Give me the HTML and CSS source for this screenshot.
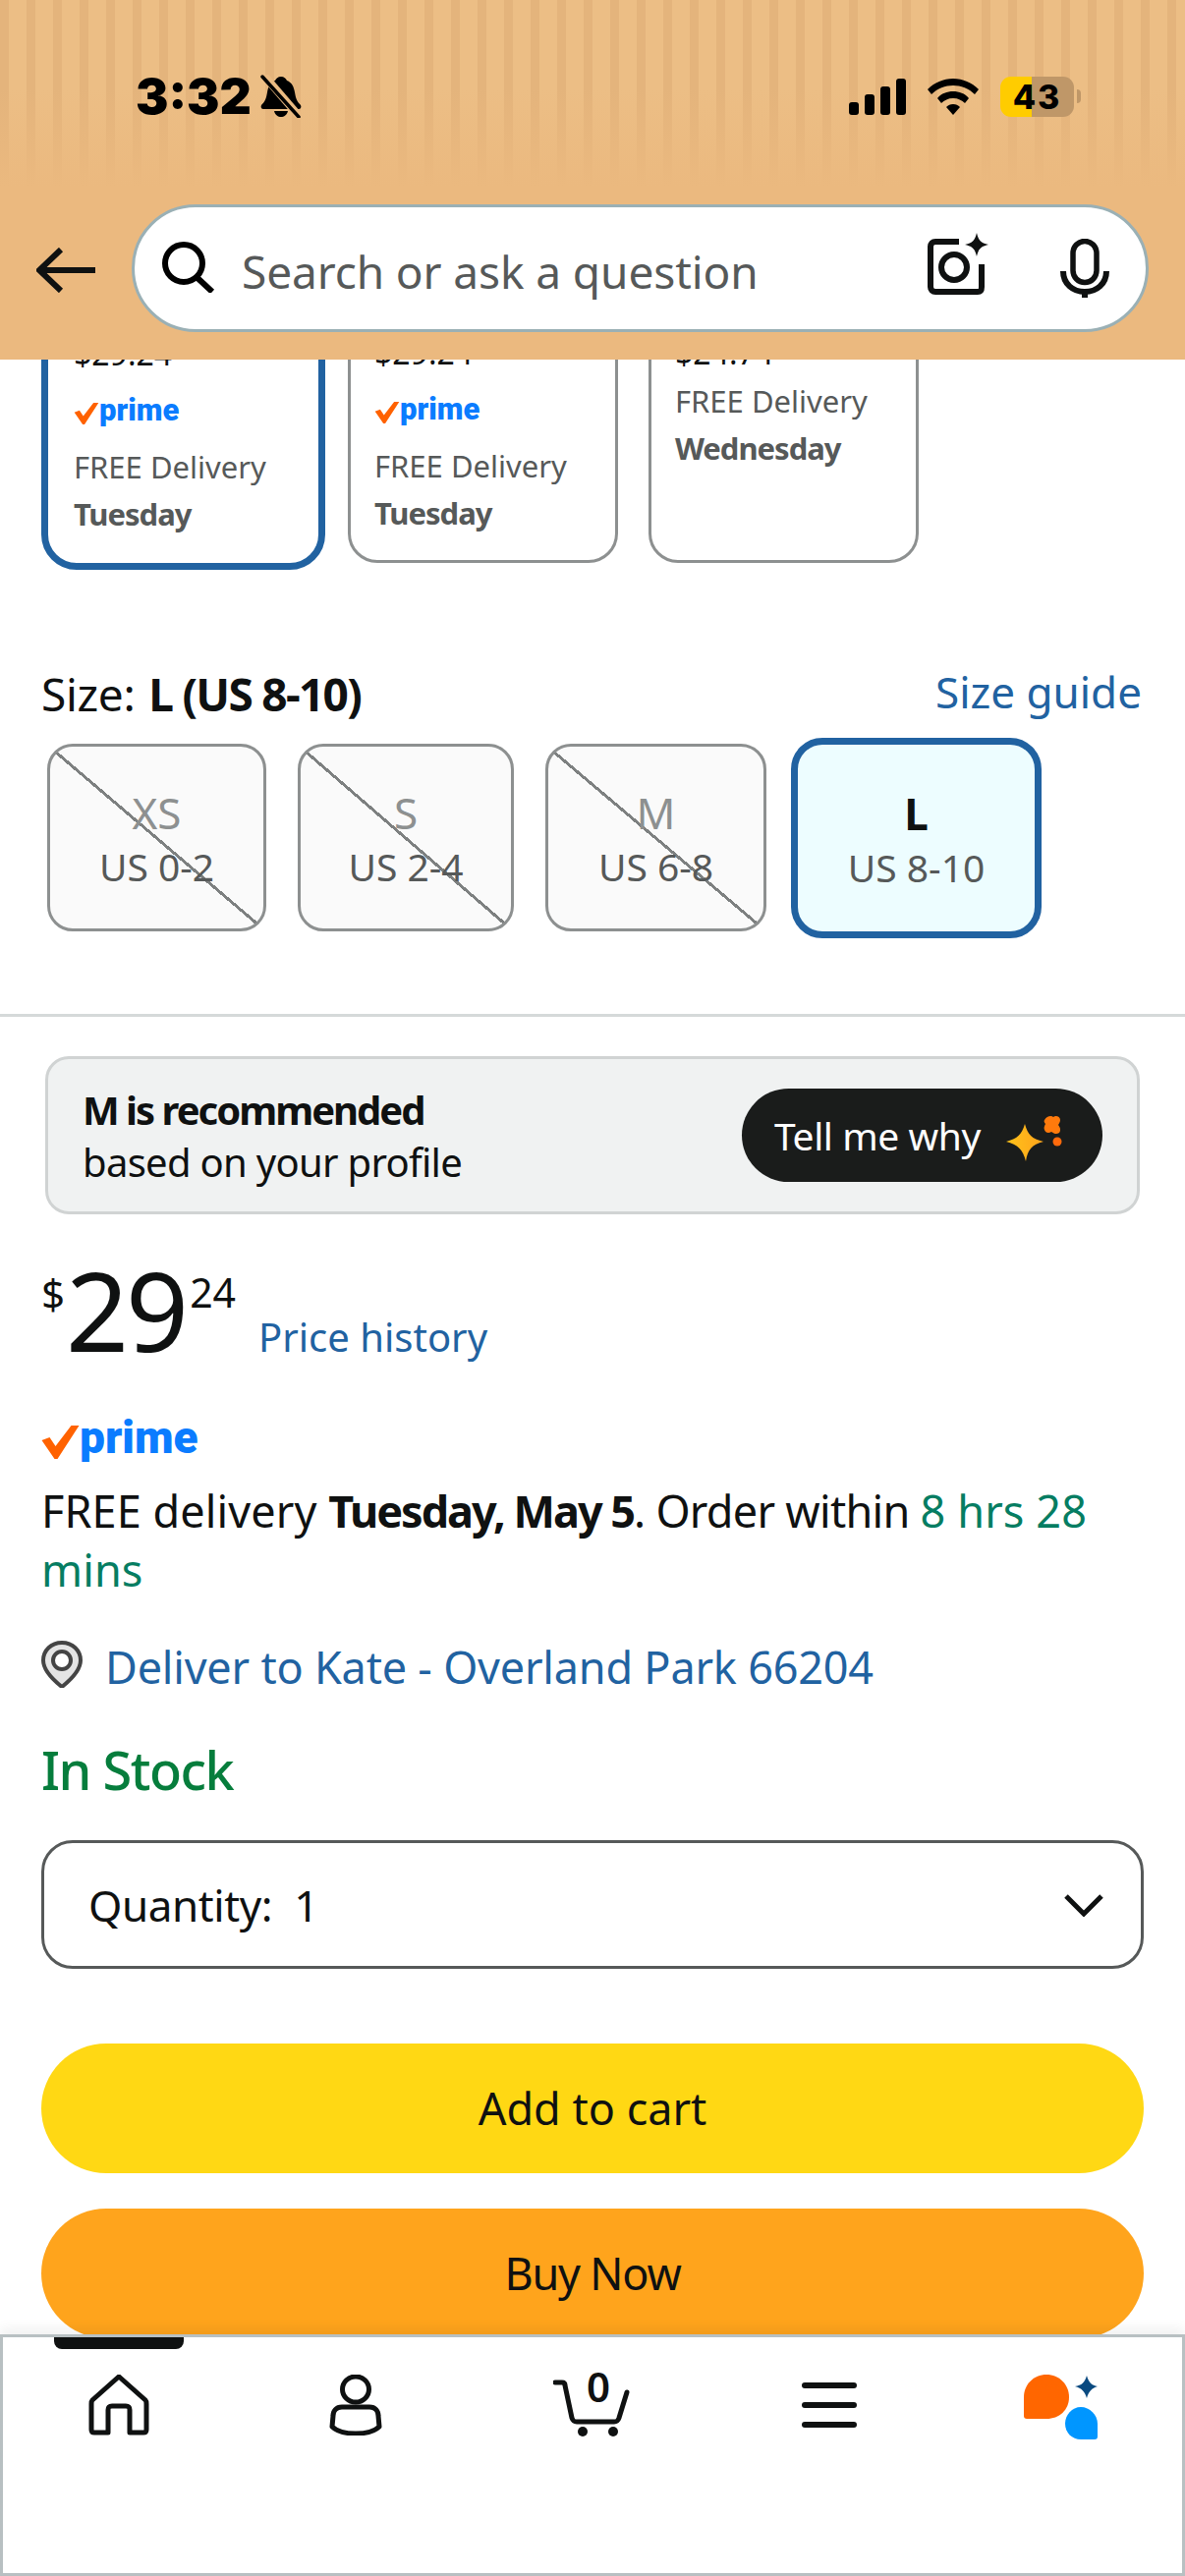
FILE: index.html
```html
<!DOCTYPE html>
<html lang="en">
<head>
<meta charset="utf-8">
<title>Product</title>
<link rel="stylesheet" href="styles.css">
</head>
<body>
<div class="app">
  <header class="top">
    <div class="status">
      <span class="time">3:32</span>
      <svg class="bell" viewBox="0 0 42 44"><path d="M21 2c3 0 5 2 6 4 5 2 7 6 8 12 1 6 2 9 6 13 1 2 0 4-2 4H3c-2 0-3-2-2-4 4-4 5-7 6-13 1-6 3-10 8-12 1-2 3-4 6-4z" fill="#000"/><path d="M14 37h14c-1 4-4 6-7 6s-6-2-7-6z" fill="#000"/><path d="M3 0l37 43" stroke="#ebbb82" stroke-width="8"/><path d="M2 2l37 41" stroke="#000" stroke-width="3.5" stroke-linecap="round"/></svg>
      <span class="status-gap"></span>
      <svg class="signal" viewBox="0 0 58 37"><rect x="0" y="24" width="10" height="13" rx="3"/><rect x="16" y="16" width="10" height="21" rx="3"/><rect x="32" y="8" width="10" height="29" rx="3"/><rect x="48" y="0" width="10" height="37" rx="3"/></svg>
      <svg class="wifi" viewBox="0 0 52 37"><path d="M26 0c10 0 19 4 26 11l-4 5C42 10 34 7 26 7S10 10 4 16l-4-5C7 4 16 0 26 0z"/><path d="M26 13c6 0 12 2 16 7l-4 5c-3-3-7-5-12-5s-9 2-12 5l-4-5c4-5 10-7 16-7z"/><path d="M26 26c3 0 5 1 7 3l-7 8-7-8c2-2 4-3 7-3z"/></svg>
      <span class="battery"><span class="battery-num">43</span></span>
      <span class="battery-cap"></span>
    </div>
    <div class="searchrow">
      <svg class="back" viewBox="0 0 60 46"><path d="M25 2L3 23l22 21M4 23h56" fill="none" stroke="#0f1111" stroke-width="6"/></svg>
      <div class="search">
        <svg class="icon-search" viewBox="0 0 54 52"><circle cx="22" cy="22" r="19" fill="none" stroke="#000" stroke-width="6"/><path d="M35 36l16 15" stroke="#000" stroke-width="6"/></svg>
        <span class="search-text">Search or ask a question</span>
        <svg class="icon-cam" viewBox="0 0 66 66"><path d="M35 9H11c-3 0-5 2-5 5v41c0 3 2 5 5 5h43c3 0 4-2 4-5V32" fill="none" stroke="#0f1111" stroke-width="6"/><circle cx="30" cy="35" r="13" fill="none" stroke="#0f1111" stroke-width="6"/><path d="M53 0c2 8 4 10 12 12-8 2-10 4-12 12-2-8-4-10-12-12 8-2 10-4 12-12z" fill="#0f1111"/></svg>
        <svg class="icon-mic" viewBox="0 0 50 60"><rect x="13" y="2.500" width="24" height="42" rx="12" fill="none" stroke="#0f1111" stroke-width="5.500"/><path d="M3 33c0 13 10 21 22 21s22-8 22-21" fill="none" stroke="#0f1111" stroke-width="6"/><path d="M25 52v8" stroke="#0f1111" stroke-width="6"/></svg>
      </div>
    </div>
  </header>

  <main class="content">
    <div class="offers">
      <div class="offer offer-on">
        <div class="offer-price">$29.24</div>
        <div class="prime prime-sm"><svg class="check-sm" viewBox="0 0 38 34"><path d="M0 15l8-3 6 9L30 0h8L16 34h-3z" fill="#ff6200"/></svg><span>prime</span></div>
        <div class="offer-line">FREE Delivery</div>
        <div class="offer-line offer-bold">Tuesday</div>
      </div>
      <div class="offer">
        <div class="offer-price">$29.24</div>
        <div class="prime prime-sm"><svg class="check-sm" viewBox="0 0 38 34"><path d="M0 15l8-3 6 9L30 0h8L16 34h-3z" fill="#ff6200"/></svg><span>prime</span></div>
        <div class="offer-line">FREE Delivery</div>
        <div class="offer-line offer-bold">Tuesday</div>
      </div>
      <div class="offer offer-short">
        <div class="offer-price">$24.74</div>
        <div class="offer-line">FREE Delivery</div>
        <div class="offer-line offer-bold">Wednesday</div>
      </div>
    </div>

    <div class="size-head">
      <div class="size-label">Size: <b>L (US 8-10)</b></div>
      <a class="size-guide">Size guide</a>
    </div>

    <div class="swatches">
      <div class="swatch swatch-off w-xs"><span class="swatch-name">XS</span><span class="swatch-us">US 0-2</span></div>
      <div class="swatch swatch-off w-s"><span class="swatch-name">S</span><span class="swatch-us">US 2-4</span></div>
      <div class="swatch swatch-off w-m"><span class="swatch-name">M</span><span class="swatch-us">US 6-8</span></div>
      <div class="swatch swatch-on"><span class="swatch-name">L</span><span class="swatch-us">US 8-10</span></div>
    </div>

    <div class="divider"></div>

    <div class="section">
      <div class="rec">
        <div class="rec-text"><b>M is recommended</b><span>based on your profile</span></div>
        <div class="why"><span>Tell me why</span>
          <svg class="spark" viewBox="0 0 58 48"><defs><linearGradient id="sg" x1="0" x2="1"><stop offset="0" stop-color="#ffc21a"/><stop offset="1" stop-color="#ffa41c"/></linearGradient></defs><path d="M19 10c3 11 7 15 19 18-12 3-16 8-18 20-3-12-8-17-20-20 11-3 16-7 19-18z" fill="url(#sg)"/><path d="M39 6c2-4 7-5 9-3 2-2 7-1 7 3 0 2-1 3-2 5 2 3 3 5 1 8-3 2-5 1-8-1-3 2-6 1-7-2-1-2 0-4 1-6-1-1-2-3-1-4z" fill="#ff7a0c"/><circle cx="52" cy="28" r="4.500" fill="#ff6a0c"/></svg>
        </div>
      </div>

      <div class="price-row">
        <span class="p-cur">$</span><span class="p-whole">29</span><span class="p-frac">24</span>
        <a class="p-hist">Price history</a>
      </div>

      <div class="prime prime-lg"><svg class="check-lg" viewBox="0 0 38 34"><path d="M0 15l8-3 6 9L30 0h8L16 34h-3z" fill="#ff6200"/></svg><span>prime</span></div>

      <p class="delivery">FREE delivery <b>Tuesday, May 5</b><span class="order">. Order within </span><span class="green">8 hrs 28 mins</span></p>

      <div class="deliver-to">
        <svg class="pin" viewBox="0 0 42 48"><path d="M21 2c11 0 19 8 19 18 0 9-9 19-19 27C11 39 2 29 2 20 2 10 10 2 21 2z" fill="#e4e4e4" stroke="#444" stroke-width="4"/><circle cx="21" cy="20" r="9" fill="#fff" stroke="#444" stroke-width="4"/></svg>
        <a class="link">Deliver to Kate - Overland Park 66204</a>
      </div>

      <div class="stock">In Stock</div>

      <div class="qty">
        <span>Quantity:&nbsp; 1</span>
        <svg class="chev" viewBox="0 0 40 24"><path d="M2 3l18 18L38 3" fill="none" stroke="#0f1111" stroke-width="5"/></svg>
      </div>

      <button class="btn btn-cart">Add to cart</button>
      <button class="btn btn-buy">Buy Now</button>
    </div>
  </main>

  <nav class="tabs">
    <span class="tab-mark"></span>
    <svg class="t-home" viewBox="0 0 62 62"><path d="M31 2L4 26c-1 1-1 2-1 4v26c0 2 1 3 3 3l14 0V36c0-3 1-4 4-4h14c3 0 4 1 4 4v23h14c2 0 3-1 3-3V30c0-2 0-3-1-4z" fill="none" stroke="#0f1111" stroke-width="5" stroke-linejoin="round"/></svg>
    <svg class="t-user" viewBox="0 0 54 62"><ellipse cx="27" cy="15" rx="13.500" ry="13" fill="none" stroke="#0f1111" stroke-width="5"/><path d="M13 33h28c6 0 9 4 9 9l1 11c-5 5-14 7-24 7S8 58 3 53l1-11c0-5 3-9 9-9z" fill="none" stroke="#0f1111" stroke-width="5" stroke-linejoin="round"/></svg>
    <div class="t-cart">
      <svg class="cart-svg" viewBox="0 0 80 68"><path d="M2 13h7c2 0 3 1 3 3l7 33c1 3 2 4 5 4h38c3 0 4-1 5-4l8-26" fill="none" stroke="#0f1111" stroke-width="5" stroke-linecap="round"/><circle cx="30" cy="63" r="5" fill="#0f1111"/><circle cx="61" cy="63" r="5" fill="#0f1111"/></svg>
      <span class="cart-count">0</span>
    </div>
    <div class="t-menu"><i></i><i></i><i></i></div>
    <svg class="t-rufus" viewBox="0 0 76 66"><path d="M0 23C0 10 10 0 23 0s23 10 23 23-10 22-23 22H3c-2 0-3-1-3-3z" fill="#ff6600"/><path d="M75 63c0 2-1 3-3 3H58c-9 0-16-7-16-16s7-17 16-17 17 8 17 17z" fill="#0096ff"/><path d="M64 1c2 7 5 10 11 11-6 2-9 5-11 12-2-7-5-10-12-12 7-1 10-4 12-11z" fill="#0a4a80"/></svg>
  </nav>
</div>
</body>
</html>
```
FILE: styles.css
```css
* { box-sizing: border-box; }
html, body { margin: 0; padding: 0; background: #fff; }
body { font-family: "Noto Sans", "Open Sans", sans-serif; color: #0f1111; }
.app { width: 1206px; height: 2622px; display: flex; flex-direction: column; overflow: hidden; }

/* header */
.top {
  flex: none; height: 366px; position: relative; z-index: 2;
  background:
    linear-gradient(to bottom, rgba(235,185,127,0) 0, rgba(235,185,127,0) 90px, #ebb97f 190px),
    repeating-linear-gradient(to right, #e4b47c 0, #e4b47c 9px, #ecbe85 9px, #ecbe85 27px);
}
.status { height: 60px; margin-top: 0; padding: 68px 0 0 138px; display: flex; align-items: center; box-sizing: content-box; }
.time { font-family: Inter, "Liberation Sans", sans-serif; font-weight: 900; font-size: 50px; line-height: 60px; color: #000; width: 127px; }
.bell { width: 42px; height: 44px; }
.status-gap { flex: 1; }
.signal { width: 58px; height: 37px; fill: #000; }
.wifi { width: 52px; height: 37px; fill: #000; margin-left: 22px; }
.battery {
  width: 75px; height: 41px; margin-left: 22px; border-radius: 11px; display: flex; align-items: center; justify-content: center;
  background: linear-gradient(to right, #ffcc00 0, #ffcc00 32px, #bf9768 32px, #bf9768 100%);
}
.battery-num { font-family: Inter, "Liberation Sans", sans-serif; font-weight: 800; font-size: 34px; color: #000; letter-spacing: 2px; }
.battery-cap { width: 4px; height: 14px; margin: 0 106px 0 3px; background: #bf9768; border-radius: 0 8px 8px 0; }

.searchrow { margin-top: 80px; padding-left: 37px; display: flex; align-items: center; }
.back { width: 60px; height: 46px; margin-top: 4px; }
.search {
  width: 1035px; height: 130px; margin-left: 37px; border: 3px solid #9ab0b5; border-radius: 65px; background: #fff;
  display: flex; align-items: center;
}
.icon-search { width: 54px; height: 52px; margin-left: 28px; margin-top: -2px; flex: none; }
.search-text { margin: 6px 0 0 27px; font-size: 46px; line-height: 60px; color: #565959; flex: 1; letter-spacing: -.1px; }
.icon-cam { width: 66px; height: 66px; margin-top: -6px; flex: none; }
.icon-mic { width: 50px; height: 60px; margin-left: 72px; margin-right: 37px; flex: none; }

/* main */
.content { flex: 1; min-height: 0; overflow: hidden; }
.offers { margin-top: -67px; padding-left: 42px; display: flex; align-items: flex-start; height: 274px; }
.offer {
  width: 275px; height: 267px; margin: 7px 0 0 0; border: 3px solid #8d9090; border-radius: 30px; padding: 36px 0 0 24px;
  color: #565959; font-size: 31px;
}
.offer-on { width: 289px; height: 281px; margin: 0 23px 0 0; border: 7px solid #2162a1; border-radius: 36px; padding: 40px 0 0 26px; }
.offer + .offer-short { margin-left: 31px; }
.offer-price { font-size: 32px; line-height: 44px; color: #0f1111; height: 44px; margin-top: -8px; }
.offer-line { font-size: 31px; line-height: 48px; }
.offer-bold { font-weight: 700; letter-spacing: -1px; }
.offer-short .offer-line:nth-child(2) { margin-top: 3px; }
.prime { display: flex; align-items: center; color: #0a7cff; font-family: Roboto, sans-serif; font-weight: 900; }
.prime-sm { font-size: 31px; height: 40px; margin: 16px 0 13px; line-height: 40px; }
.check-sm { width: 26px; height: 22px; margin-top: 6px; flex: none; }
.prime-lg { font-size: 46px; height: 44px; line-height: 44px; margin-top: 58px; }
.check-lg { width: 39px; height: 34px; margin-top: 9px; flex: none; }

.size-head { margin-top: 100px; padding: 0 44px 0 42px; display: flex; justify-content: space-between; align-items: center; height: 62px; }
.size-label { font-size: 46px; line-height: 62px; letter-spacing: -.3px; margin-top: 3px; }
.size-label b { letter-spacing: -1.700px; margin-left: 2px; }
.size-guide { font-size: 44px; line-height: 62px; color: #2162a1; }

.swatches { margin-top: 16px; padding-left: 48px; display: flex; align-items: flex-start; height: 204px; gap: 32px; }
.swatch { margin-top: 6px; height: 191px; border-radius: 26px; border: 3px solid #8d9090; display: flex; flex-direction: column; align-items: center; padding-top: 39px; flex: none; }
.swatch-off {
  background: linear-gradient(to top right, #fafafa calc(50% - 2px), #7d8080 calc(50% - 2px), #7d8080 calc(50% + 1px), #fafafa calc(50% + 1px));
}
.w-xs { width: 223px; }
.w-s { width: 220px; }
.w-m { width: 225px; }
.swatch-name { font-size: 44px; line-height: 56px; color: #8d9090; }
.swatch-us { font-size: 39px; line-height: 54px; color: #565959; }
.swatch-on { margin: 0 0 0 -7px; width: 255px; height: 204px; border: 7px solid #2162a1; border-radius: 32px; background: #edfdff; padding-top: 42px; }
.swatch-on .swatch-name { color: #0f1111; font-weight: 700; }

.divider { margin-top: 77px; height: 3px; background: #d5d9d9; }
.section { padding: 0 42px; }
.rec {
  margin: 40px 4px 0 4px; height: 161px; border: 3px solid #d0d3d3; border-radius: 24px; background: #f0f2f2;
  display: flex; align-items: center; justify-content: space-between; padding: 0 35px 0 35px;
}
.rec-text { display: flex; flex-direction: column; font-size: 40px; line-height: 53px; letter-spacing: -.7px; }
.rec-text b { letter-spacing: -2px; }
.why { width: 367px; height: 95px; border-radius: 48px; background: #1a1c1b; color: #fff; display: flex; align-items: center; padding-left: 33px; font-size: 39px; letter-spacing: -.4px; }
.spark { width: 58px; height: 48px; margin-left: 26px; margin-top: 4px; }

.price-row { margin-top: 47px; display: flex; align-items: flex-start; height: 100px; }
.p-cur { font-size: 42px; line-height: 52px; margin-top: 8px; }
.p-whole { font-size: 112px; line-height: 112px; letter-spacing: -3px; margin-left: 1px; margin-top: -6px; }
.p-frac { font-size: 41px; line-height: 52px; margin-left: 4px; margin-top: 6px; }
.p-hist { font-size: 40px; line-height: 60px; color: #2162a1; margin-left: 23px; margin-top: 48px; }

.delivery { margin: 23px 0 0; font-size: 45px; line-height: 60px; letter-spacing: .1px; }
.delivery b { letter-spacing: -2px; }
.order { letter-spacing: -.7px; }
.green { color: #067d62; }
.deliver-to { margin-top: 39px; display: flex; align-items: center; height: 60px; }
.pin { width: 42px; height: 48px; margin-top: -6px; flex: none; }
.link { margin-left: 23px; font-size: 45px; line-height: 60px; color: #2162a1; letter-spacing: -.2px; }
.stock { margin-top: 39px; font-size: 54px; line-height: 70px; color: #067d3c; letter-spacing: -1.500px; font-weight: 500; }
.qty {
  margin-top: 37px; height: 131px; border: 3px solid #565959; border-radius: 32px;
  display: flex; align-items: center; justify-content: space-between; padding: 0 38px 0 45px; font-size: 44px; letter-spacing: -.4px;
}
.chev { width: 40px; height: 24px; }
.btn { display: block; width: 100%; height: 132px; border: 0; border-radius: 66px; font: 400 45px/60px "Noto Sans", sans-serif; color: #0f1111; padding: 0; }
.btn-cart { margin-top: 76px; background: #ffd814; }
.btn-buy { margin-top: 36px; background: #ffa41c; letter-spacing: -1.200px; }

/* tabs */
.tabs {
  flex: none; height: 246px; position: relative; z-index: 2; background: #fff; border: 3px solid #b8c0c2;
  box-shadow: 0 -6px 12px rgba(0,0,0,.06);
  display: flex; align-items: flex-start;
}
.tab-mark { position: absolute; left: 52px; top: 0; width: 132px; height: 12px; background: #0f1111; border-radius: 0 0 8px 8px; }
.t-home { width: 62px; height: 62px; margin: 38px 0 0 87px; flex: none; }
.t-user { width: 54px; height: 62px; margin: 38px 0 0 183px; flex: none; }
.t-cart { position: relative; width: 80px; height: 68px; margin: 33px 0 0 174px; flex: none; }
.cart-svg { width: 80px; height: 68px; display: block; }
.cart-count { position: absolute; left: 29px; top: -8px; width: 34px; text-align: center; font-family: "Noto Sans", sans-serif; font-weight: 600; font-size: 42px; line-height: 50px; color: #0f1111; }
.t-menu { width: 56px; height: 46px; margin: 46px 0 0 173px; display: flex; flex-direction: column; justify-content: space-between; flex: none; }
.t-menu i { display: block; height: 6px; border-radius: 3px; background: #0f1111; }
.t-rufus { width: 76px; height: 66px; margin: 38px 0 0 170px; flex: none; }
```
